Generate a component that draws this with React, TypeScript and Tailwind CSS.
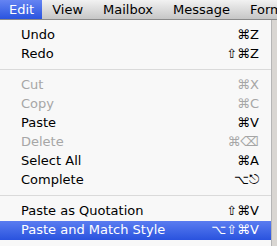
import React from 'react'

type Item =
  | { sep: true }
  | { label: string; keys: string; disabled?: boolean; active?: boolean }

const items: Item[] = [
  { label: 'Undo', keys: '⌘Z' },
  { label: 'Redo', keys: '⇧⌘Z' },
  { sep: true },
  { label: 'Cut', keys: '⌘X', disabled: true },
  { label: 'Copy', keys: '⌘C', disabled: true },
  { label: 'Paste', keys: '⌘V' },
  { label: 'Delete', keys: '⌘⌫', disabled: true },
  { label: 'Select All', keys: '⌘A' },
  { label: 'Complete', keys: '⌥⎋' },
  { sep: true },
  { label: 'Paste as Quotation', keys: '⇧⌘V' },
  { label: 'Paste and Match Style', keys: '⌥⇧⌘V', active: true },
]

const menus = ['View', 'Mailbox', 'Message', 'Format']

export default function App() {
  return (
    <div
      className="w-[277px] h-[246px] overflow-hidden bg-[#d9d6d2] text-[13px] text-black"
      style={{ fontFamily: '"DejaVu Sans", "Liberation Sans", sans-serif' }}
    >
      {/* menu bar */}
      <div className="flex h-[20px] items-stretch bg-gradient-to-b from-[#f2f2f2] to-[#c6c6c6] border-b border-[#8a8a8a] whitespace-nowrap">
        <div className="flex items-center pl-[9px] pr-[8px] bg-gradient-to-b from-[#6584f2] to-[#2a53df] text-white">
          Edit
        </div>
        {menus.map(m => (
          <div key={m} className="flex items-center px-[10px]">{m}</div>
        ))}
      </div>

      {/* dropdown */}
      <div className="w-[272px] bg-[#f8f8f8] border-r border-[#b5b5b5] pt-[5.5px] pb-[8px]">
        {items.map((it, i) =>
          'sep' in it ? (
            <div key={i} className="h-[12px] flex items-center">
              <div className="w-full h-px bg-[#dadada]" />
            </div>
          ) : (
            <div
              key={i}
              className={`h-[19px] flex items-center justify-between pl-[21px] pr-[12px] ${
                it.active
                  ? 'bg-gradient-to-b from-[#5a7cf0] to-[#2a52de] text-white'
                  : it.disabled
                  ? 'text-[#a6a6a6]'
                  : ''
              }`}
            >
              <span>{it.label}</span>
              <span>{it.keys}</span>
            </div>
          )
        )}
      </div>
    </div>
  )
}
